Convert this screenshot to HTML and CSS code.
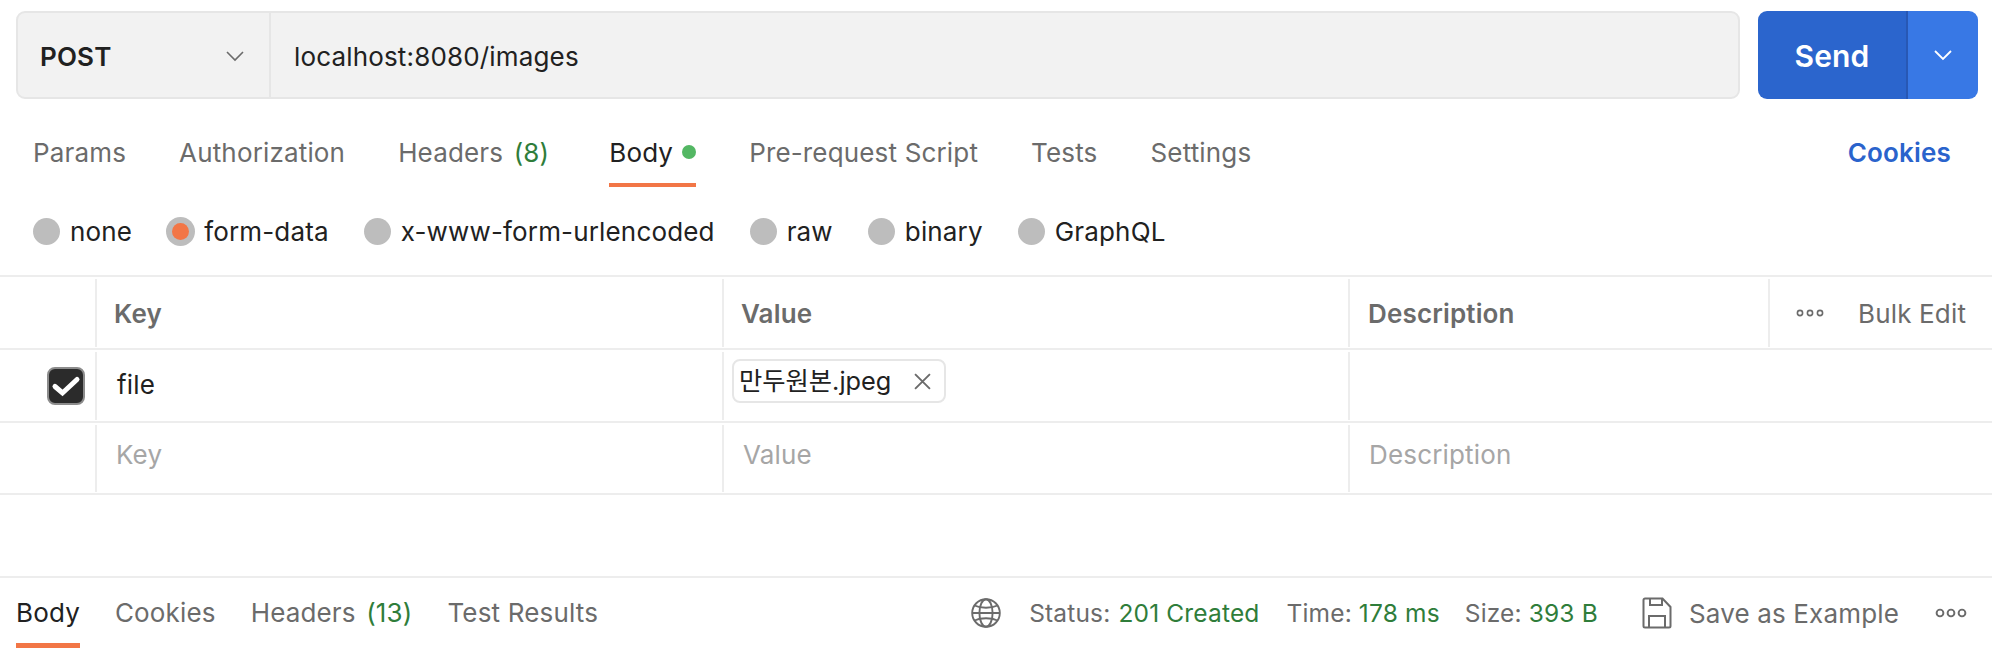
FILE: index.html
```html
<!DOCTYPE html>
<html lang="ko">
<head>
<meta charset="utf-8">
<title>Postman request</title>
<link rel="stylesheet" href="styles.css">
</head>
<body>
<div class="app">
  <div class="request-bar">
    <div class="url-box">
      <div class="method"><span>POST</span>
        <svg class="chev" viewBox="0 0 20 12"><path d="M2 2l8 8 8-8" fill="none" stroke="#6b6b6b" stroke-width="1.6"/></svg>
      </div>
      <div class="url">localhost:8080/images</div>
    </div>
    <div class="send">
      <div class="send-main">Send</div>
      <div class="send-more"><svg class="chev" viewBox="0 0 20 12"><path d="M2 2l8 8 8-8" fill="none" stroke="#fff" stroke-width="1.8"/></svg></div>
    </div>
  </div>

  <div class="tabs">
    <span class="tab">Params</span>
    <span class="tab">Authorization</span>
    <span class="tab">Headers <em>(8)</em></span>
    <span class="tab tab-active tab-body">Body<i class="dot"></i></span>
    <span class="tab">Pre-request Script</span>
    <span class="tab">Tests</span>
    <span class="tab">Settings</span>
    <span class="cookies">Cookies</span>
  </div>

  <div class="radios">
    <label class="radio"><i class="rd"></i>none</label>
    <label class="radio"><i class="rd rd-on"></i>form-data</label>
    <label class="radio"><i class="rd"></i>x-www-form-urlencoded</label>
    <label class="radio"><i class="rd"></i>raw</label>
    <label class="radio"><i class="rd"></i>binary</label>
    <label class="radio"><i class="rd"></i>GraphQL</label>
  </div>

  <div class="table">
    <div class="row head">
      <div class="cell c0"></div>
      <div class="cell c1">Key</div>
      <div class="cell c2">Value</div>
      <div class="cell c3">Description</div>
      <div class="cell c4">
        <svg class="dots-sm" viewBox="0 0 28 8"><g fill="none" stroke="#6b6b6b" stroke-width="1.6"><circle cx="4" cy="4" r="2.6"/><circle cx="14" cy="4" r="2.6"/><circle cx="24" cy="4" r="2.6"/></g></svg>
        <span class="bulk">Bulk Edit</span>
      </div>
    </div>
    <div class="row body-row">
      <div class="cell c0"><span class="check"><svg viewBox="2 2 34 34"><path d="M8 19.500l7.500 6.500L30 12.500" fill="none" stroke="#fff" stroke-width="5" stroke-linecap="round" stroke-linejoin="miter"/></svg></span></div>
      <div class="cell c1 val">file</div>
      <div class="cell c2 chip-cell">
        <div class="chip"><span>만두원본.jpeg</span>
          <svg class="x" viewBox="0 0 16 16"><path d="M1 1l14 14M15 1L1 15" stroke="#6b6b6b" stroke-width="1.8" fill="none"/></svg>
        </div>
      </div>
      <div class="cell c34"></div>
    </div>
    <div class="row ph">
      <div class="cell c0"></div>
      <div class="cell c1 val">Key</div>
      <div class="cell c2 val">Value</div>
      <div class="cell c34 val">Description</div>
    </div>
  </div>

  <div class="spacer"></div>

  <div class="footer">
    <div class="f-tabs">
      <span class="tab tab-active f-tab">Body</span>
      <span class="tab f-tab">Cookies</span>
      <span class="tab f-tab">Headers <em>(13)</em></span>
      <span class="tab f-tab">Test Results</span>
    </div>
    <div class="f-right">
      <svg class="globe" viewBox="0 0 30 32"><g fill="none" stroke="#6b6b6b" stroke-width="1.9"><circle cx="15" cy="16" r="13.8"/><ellipse cx="15" cy="16" rx="6.6" ry="13.8"/><path d="M3.5 8.5c6 3 17 3 23 0M3.5 23.5c6-3 17-3 23 0M1.2 16h27.6"/></g></svg>
      <span class="stat stat-status">Status:<em>201 Created</em></span>
      <span class="stat stat-time">Time:<em>178 ms</em></span>
      <span class="stat stat-size">Size:<em>393 B</em></span>
      <svg class="save" viewBox="0 0 30 32"><g fill="none" stroke="#6b6b6b" stroke-width="2"><path d="M1.500 3A1.500 1.500 0 0 1 3 1.500h17.500l8 8.500V29a1.500 1.500 0 0 1-1.500 1.500H3A1.500 1.500 0 0 1 1.500 29z"/><path d="M8 1.500V8h12V1.500M7 30.500V19h16v11.500"/></g></svg>
      <span class="save-text">Save as Example</span>
      <svg class="dots-lg" viewBox="0 0 32 10"><g fill="none" stroke="#6b6b6b" stroke-width="1.9"><circle cx="5" cy="5" r="3.400"/><circle cx="16" cy="5" r="3.400"/><circle cx="27" cy="5" r="3.400"/></g></svg>
    </div>
  </div>
</div>
</body>
</html>
```
FILE: styles.css
```css
* { box-sizing: border-box; }
html, body { margin: 0; padding: 0; background: #fff; }
body { font-family: Inter, "Noto Sans CJK KR", sans-serif; font-size: 26px; letter-spacing: 0.16px; color: #212121; }
em { font-style: normal; color: #2f7d3a; }
i { display: block; }

.app { width: 1992px; height: 658px; display: flex; flex-direction: column; overflow: hidden; }

.request-bar { display: flex; padding: 11px 14px 0 16px; height: 99px; flex: none; }
.url-box { width: 1724px; height: 88px; display: flex; background: #f2f2f2; border: 2px solid #e6e6e6; border-radius: 9px; }
.method { width: 253px; flex: none; display: flex; align-items: center; justify-content: space-between; padding: 2px 24px 0 22px; font-weight: 600; border-right: 2px solid #e6e6e6; }
.chev { width: 20px; height: 12px; }
.url { display: flex; align-items: center; padding: 2px 0 0 23px; }
.send { margin-left: 18px; width: 220px; height: 88px; display: flex; border-radius: 9px; overflow: hidden; color: #fff; }
.send-main { width: 150px; background: #2b65cd; border-right: 2px solid #2858b4; display: flex; align-items: center; justify-content: center; font-size: 30px; font-weight: 600; padding-top: 2px; }
.send-more { flex: 1; background: #3878e5; display: flex; align-items: center; justify-content: center; }

.tabs { display: flex; align-items: stretch; height: 89px; flex: none; padding-left: 33px; padding-right: 41px; gap: 53px; }
.tab { color: #6b6b6b; display: flex; align-items: center; gap: 3px; white-space: pre; border-bottom: 4px solid transparent; }
.tabs .tab { height: 88px; padding-top: 22px; }
.tab-active { color: #212121; border-bottom-color: #f27646; }
.tabs .tab-active { color: #212121; }
.tab-body { margin-left: 7px; }
.dot { width: 14px; height: 14px; border-radius: 50%; background: #53b763; margin-left: 6px; }
.cookies { margin-left: auto; align-self: center; margin-top: 17px; color: #2a63cc; font-weight: 600; }

.radios { display: flex; height: 87px; flex: none; padding-left: 33px; gap: 35px; align-items: center; }
.radio { display: flex; align-items: center; gap: 10px; color: #212121; }
.rd { width: 27px; height: 27px; border-radius: 50%; background: #bdbdbd; position: relative; }
.rd-on { width: 29px; height: 29px; margin: 0 -1px; }
.rd-on::after { content: ""; position: absolute; left: 6px; top: 6px; width: 17px; height: 17px; border-radius: 50%; background: #f27646; }

.table { flex: none; border-top: 2px solid #ededed; }
.row { display: flex; height: 73px; border-bottom: 2px solid #ededed; }
.ph { height: 72px; }
.cell { display: flex; align-items: center; border-right: 2px solid #ededed; margin-top: 2px; margin-bottom: 1px; padding-left: 17px; color: #6b6b6b; }
.head .cell { font-weight: 600; }
.c0 { width: 97px; padding-left: 47px; }
.c1 { width: 627px; }
.c2 { width: 626px; }
.c3 { width: 420px; padding-left: 18px; }
.c4 { flex: 1; border-right: 0; padding-left: 26px; }
.c34 { flex: 1; border-right: 0; }
.head .c4 { font-weight: 400; }
.dots-sm { width: 28px; height: 8px; }
.bulk { margin-left: 34px; }
.val { color: #212121; padding-left: 20px; }
.body-row .val { padding-bottom: 3px; }
.ph .val { color: #a6a6a6; padding-bottom: 8px; padding-left: 19px; }
.check { width: 38px; height: 38px; background: #2b2b2b; border: 2px solid #8c8c8c; border-radius: 8px; display: flex; align-items: center; justify-content: center; }
.check svg { width: 34px; height: 34px; flex: none; }
.chip-cell { padding-left: 8px; align-items: flex-start; padding-top: 7px; }
.chip { height: 44px; width: 214px; border: 2px solid #e6e6e6; border-radius: 8px; display: flex; align-items: center; padding: 0 0 4px 5px; color: #212121; white-space: nowrap; font-size: 25.3px; letter-spacing: 0; }
.x { width: 17px; height: 17px; margin: 4px 13px 0 auto; }

.spacer { flex: 1; }

.footer { flex: none; height: 82px; border-top: 2px solid #ededed; display: flex; justify-content: space-between; padding-left: 16px; }
.f-tabs { display: flex; gap: 35px; height: 70px; }
.f-tab { height: 70px; padding-top: 4px; border-bottom-width: 5px; }
.f-right { display: flex; align-items: center; height: 70px; padding-right: 25px; }
.globe, .save { width: 30px; height: 32px; }
.stat { color: #6b6b6b; white-space: pre; font-size: 24.5px; }
.stat em { margin-left: 7px; }
.stat-status em { margin-left: 8px; }
.stat-status { margin-left: 28px; }
.stat-time { margin-left: 27px; }
.stat-size { margin-left: 25px; }
.save { margin-left: 44px; }
.save-text { margin-left: 17px; color: #6b6b6b; }
.dots-lg { width: 32px; height: 10px; margin-left: 36px; }
```
